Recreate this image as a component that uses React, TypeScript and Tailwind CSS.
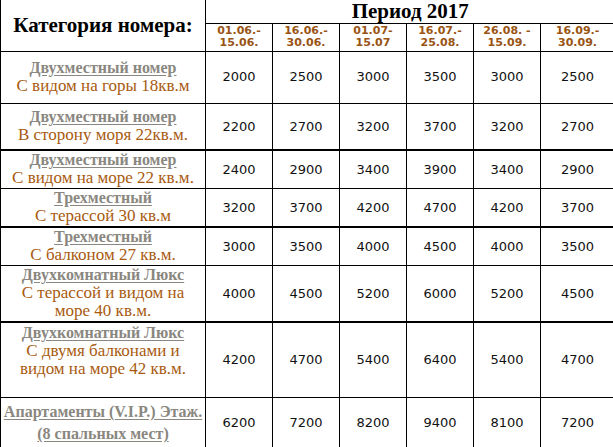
const periods = [
  ['01.06.-', '15.06.'],
  ['16.06.-', '30.06.'],
  ['01.07-', '15.07'],
  ['16.07.-', '25.08.'],
  ['26.08. -', '15.09.'],
  ['16.09.-', '30.09.'],
];

type Room = {
  title: string[];
  desc: string[];
  prices: number[];
  h: string;
  thick?: boolean;
};

const rooms: Room[] = [
  { title: ['Двухместный номер'], desc: ['С видом на горы 18кв.м'], prices: [2000, 2500, 3000, 3500, 3000, 2500], h: 'h-[52px]' },
  { title: ['Двухместный номер'], desc: ['В сторону моря 22кв.м.'], prices: [2200, 2700, 3200, 3700, 3200, 2700], h: 'h-[47px]', thick: true },
  { title: ['Двухместный номер'], desc: ['С видом на море 22 кв.м.'], prices: [2400, 2900, 3400, 3900, 3400, 2900], h: 'h-[38px]' },
  { title: ['Трехместный'], desc: ['С терассой 30 кв.м'], prices: [3200, 3700, 4200, 4700, 4200, 3700], h: 'h-[39px]', thick: true },
  { title: ['Трехместный'], desc: ['С балконом 27 кв.м.'], prices: [3000, 3500, 4000, 4500, 4000, 3500], h: 'h-[38px]' },
  { title: ['Двухкомнатный Люкс'], desc: ['С терассой и видом на', 'море 40 кв.м.'], prices: [4000, 4500, 5200, 6000, 5200, 4500], h: 'h-[57px]', thick: true },
  { title: ['Двухкомнатный Люкс'], desc: ['С двумя балконами и', 'видом на море 42 кв.м.', '\u00a0'], prices: [4200, 4700, 5400, 6400, 5400, 4700], h: 'h-[75px]' },
  { title: ['Апартаменты (V.I.P.) Этаж.', '(8 спальных мест)'], desc: [], prices: [6200, 7200, 8200, 9400, 8100, 7200], h: 'h-[52px]' },
];

export default function App() {
  return (
    <div className="w-[613px] overflow-hidden bg-white">
      <table className="w-[614px] table-fixed border-collapse">
        <colgroup>
          <col className="w-[205px]" />
          <col className="w-[67px]" />
          <col className="w-[67px]" />
          <col className="w-[67px]" />
          <col className="w-[67px]" />
          <col className="w-[67px]" />
          <col className="w-[74px]" />
        </colgroup>
        <thead>
          <tr className="h-[23px]">
            <th
              rowSpan={2}
              className="border-l border-r border-b border-black text-center align-middle font-['Liberation_Serif',serif] text-[21px] font-bold whitespace-nowrap text-black"
            >
              Категория номера:
            </th>
            <th
              colSpan={6}
              className="border-b border-black p-0 pt-[1px] text-center align-middle font-['Liberation_Serif',serif] text-[21px] font-bold leading-[21px] text-black"
            >
              Период 2017
            </th>
          </tr>
          <tr className="h-[28px]">
            {periods.map((p, i) => (
              <th
                key={i}
                className="border-r border-b border-black text-center align-middle font-['DejaVu_Sans',sans-serif] text-[11px] font-bold leading-[12px] text-[#995414]"
              >
                <div>{p[0]}</div>
                <div>{p[1]}</div>
              </th>
            ))}
          </tr>
        </thead>
        <tbody>
          {rooms.map((r, i) => {
            const last = i === rooms.length - 1;
            return (
              <tr key={i} className={r.h}>
                <td
                  className={`border-l border-r border-black p-0 text-center align-middle font-['Liberation_Serif',serif] ${r.thick ? 'border-b-2' : 'border-b'}`}
                >
                  {r.title.map((t, j) => (
                    <div
                      key={j}
                      className={`whitespace-nowrap text-[16px] font-bold text-[#8a8780] underline underline-offset-2 ${last ? 'leading-[22px]' : 'leading-[18px]'}`}
                    >
                      {t}
                    </div>
                  ))}
                  {r.desc.map((d, j) => (
                    <div key={j} className="text-[17px] leading-[18px] text-[#a85a10]">
                      {d}
                    </div>
                  ))}
                </td>
                {r.prices.map((p, j) => (
                  <td
                    key={j}
                    className={`border-r border-black p-0 text-center align-middle font-['DejaVu_Sans',sans-serif] text-[13px] text-[#111] ${r.thick ? 'border-b-2' : 'border-b'}`}
                  >
                    {p}
                  </td>
                ))}
              </tr>
            );
          })}
        </tbody>
      </table>
    </div>
  );
}
